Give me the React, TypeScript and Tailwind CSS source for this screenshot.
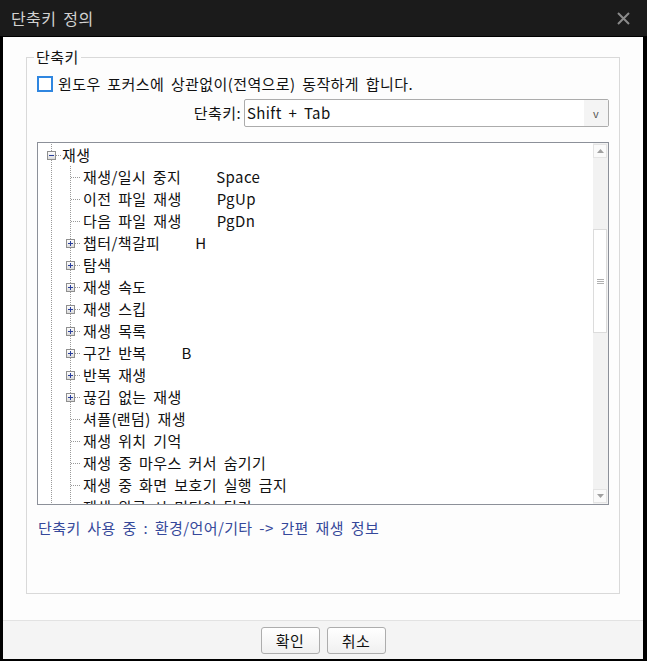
import React from 'react';

type Row = {
    label: string;
    key?: string;
    depth: 0 | 1;
    expander?: 'plus' | 'minus';
};

const rows: Row[] = [
    { label: '재생', depth: 0, expander: 'minus' },
    { label: '재생/일시 중지', key: 'Space', depth: 1 },
    { label: '이전 파일 재생', key: 'PgUp', depth: 1 },
    { label: '다음 파일 재생', key: 'PgDn', depth: 1 },
    { label: '챕터/책갈피', key: 'H', depth: 1, expander: 'plus' },
    { label: '탐색', depth: 1, expander: 'plus' },
    { label: '재생 속도', depth: 1, expander: 'plus' },
    { label: '재생 스킵', depth: 1, expander: 'plus' },
    { label: '재생 목록', depth: 1, expander: 'plus' },
    { label: '구간 반복', key: 'B', depth: 1, expander: 'plus' },
    { label: '반복 재생', depth: 1, expander: 'plus' },
    { label: '끊김 없는 재생', depth: 1, expander: 'plus' },
    { label: '셔플(랜덤) 재생', depth: 1 },
    { label: '재생 위치 기억', depth: 1 },
    { label: '재생 중 마우스 커서 숨기기', depth: 1 },
    { label: '재생 중 화면 보호기 실행 금지', depth: 1 },
    { label: '재생 완료 시 미디어 닫기', depth: 1 },
];

const font = "font-['Noto_Sans_CJK_KR',sans-serif]";

// one connector cell of the tree (19 x 22)
function Connector({ mode, expander }: { mode: 'line' | 'node' | 'leaf'; expander?: 'plus' | 'minus' }) {
    const dot = { stroke: '#9a9a9a', strokeDasharray: '1 1', shapeRendering: 'crispEdges' as const };
    return (
        <svg width="19" height="22" viewBox="0 0 19 22" className="shrink-0">
            {mode === 'line' && <line x1="9.5" y1="0" x2="9.5" y2="22" {...dot} />}
            {mode === 'leaf' && (
                <>
                    <line x1="9.5" y1="0" x2="9.5" y2="22" {...dot} />
                    <line x1="10" y1="11.5" x2="19" y2="11.5" {...dot} />
                </>
            )}
            {mode === 'node' && (
                <>
                    <defs>
                        <linearGradient id="boxfill" x1="0" y1="0" x2="0" y2="1">
                            <stop offset="0" stopColor="#ffffff" />
                            <stop offset="1" stopColor="#d9d9d9" />
                        </linearGradient>
                    </defs>
                    <line x1="9.5" y1="0" x2="9.5" y2="7" {...dot} />
                    <line x1="9.5" y1="16" x2="9.5" y2="22" {...dot} />
                    <line x1="14" y1="11.5" x2="19" y2="11.5" {...dot} />
                    <rect x="5.5" y="7.5" width="8" height="8" fill="url(#boxfill)" stroke="#8f8f8f" shapeRendering="crispEdges" />
                    <line x1="7" y1="11.5" x2="12" y2="11.5" stroke="#2a3f9c" shapeRendering="crispEdges" />
                    {expander === 'plus' && (
                        <line x1="9.5" y1="9" x2="9.5" y2="14" stroke="#2a3f9c" shapeRendering="crispEdges" />
                    )}
                </>
            )}
        </svg>
    );
}

function TreeRow({ row }: { row: Row }) {
    return (
        <div className="flex h-[22px] items-center whitespace-nowrap">
            {row.depth === 0 ? (
                <>
                    <Connector mode="node" expander={row.expander} />
                    <span className="ml-[1px]">{row.label}</span>
                </>
            ) : (
                <>
                    <Connector mode="line" />
                    <Connector mode={row.expander ? 'node' : 'leaf'} expander={row.expander} />
                    <span className="ml-[3px]">{row.label}</span>
                </>
            )}
            {row.key && <span className="ml-[35px]">{row.key}</span>}
        </div>
    );
}

function ScrollBar() {
    return (
        <div className="flex w-[15px] shrink-0 flex-col bg-[#f2f2f2] py-[1px] pr-[1px]">
            <div className="flex h-[14px] items-center justify-center border border-[#e4e4e4] bg-[#fafafa]">
                <svg width="7" height="4" viewBox="0 0 7 4">
                    <path d="M0 4 L3.5 0 L7 4 Z" fill="#a0a0a0" />
                </svg>
            </div>
            <div className="h-[71px]" />
            <div className="flex h-[104px] items-center justify-center border border-[#dcdcdc] bg-white">
                <svg width="7" height="5" viewBox="0 0 7 5">
                    <path d="M0 0.5 H7 M0 2.5 H7 M0 4.5 H7" stroke="#b0b0b0" />
                </svg>
            </div>
            <div className="flex-1" />
            <div className="flex h-[14px] items-center justify-center border border-[#e4e4e4] bg-[#fafafa]">
                <svg width="7" height="4" viewBox="0 0 7 4">
                    <path d="M0 0 L3.5 4 L7 0 Z" fill="#a0a0a0" />
                </svg>
            </div>
        </div>
    );
}

export default function App() {
    return (
        <div className={`flex h-[661px] w-[647px] flex-col bg-black text-[15px] tracking-[0.4px] text-[#111] [word-spacing:3px] ${font}`}>
            {/* TITLE BAR */}
            <div className="flex h-[37px] shrink-0 items-center justify-between border-b border-black bg-[#1b1b1b] pl-[11px] pr-[17px]">
                <span className="text-[16px] leading-[18px] text-[#d2d2d2]">단축키 정의</span>
                <svg width="13" height="13" viewBox="0 0 13 13">
                    <path d="M1 1 L12 12 M12 1 L1 12" stroke="#8a8a8a" strokeWidth="2" />
                </svg>
            </div>

            {/* BODY */}
            <div className="mb-[2px] ml-[3px] mr-[4px] flex flex-1 flex-col bg-[#fdfdfd]">
                <div className="flex-1 px-[23px] pt-[20px]">
                    {/* GROUP BOX */}
                    <div className="relative flex h-[537px] flex-col border border-[#d9d9d9] px-[10px]">
                        <span className="absolute left-[7px] top-[-10px] bg-[#fdfdfd] px-[2px] leading-[18px]">단축키</span>

                        {/* GLOBAL CHECKBOX */}
                        <div className="mt-[17px] flex h-[18px] items-center">
                            <div className="h-[16px] w-[16px] border-2 border-[#2f86e0] bg-white" />
                            <span className="ml-[5px] leading-[18px]">
                                윈도우 포커스에 상관없이(전역으로) 동작하게 합니다.
                            </span>
                        </div>

                        {/* SHORTCUT SELECT */}
                        <div className="mt-[6px] flex h-[28px] items-center justify-end">
                            <span className="mr-[3px]">단축키:</span>
                            <div className="flex h-[28px] w-[365px] items-center rounded-[2px] border border-[#acacac] bg-white">
                                <span className="flex-1 pl-[2px]">Shift + Tab</span>
                                <div className="flex h-full w-[24px] items-center justify-center bg-[#f4f4f4] text-[11px] text-[#555]">
                                    v
                                </div>
                            </div>
                        </div>

                        {/* TREE */}
                        <div className="mt-[15px] flex h-[363px] border border-[#8c9099] bg-white">
                            <div className="flex-1 overflow-hidden pl-[4px] pt-[1px] leading-[22px]">
                                {rows.map((row, idx) => (
                                    <TreeRow key={idx} row={row} />
                                ))}
                            </div>
                            <ScrollBar />
                        </div>

                        {/* INFO */}
                        <div className="mt-[14px] pl-[1px] leading-[18px] text-[#35489a]">
                            단축키 사용 중 : 환경/언어/기타 -&gt; 간편 재생 정보
                        </div>
                    </div>
                </div>

                {/* FOOTER */}
                <div className="flex h-[39px] shrink-0 items-start justify-center gap-[7px] border-t border-[#e2e2e2] bg-[#f4f4f4] pt-[6px]">
                    <button className="h-[27px] w-[59px] rounded-[3px] border border-[#adadad] bg-gradient-to-b from-white to-[#f0f0f0] leading-[25px]">
                        확인
                    </button>
                    <button className="h-[27px] w-[59px] rounded-[3px] border border-[#adadad] bg-gradient-to-b from-white to-[#f0f0f0] leading-[25px]">
                        취소
                    </button>
                </div>
            </div>
        </div>
    );
}
